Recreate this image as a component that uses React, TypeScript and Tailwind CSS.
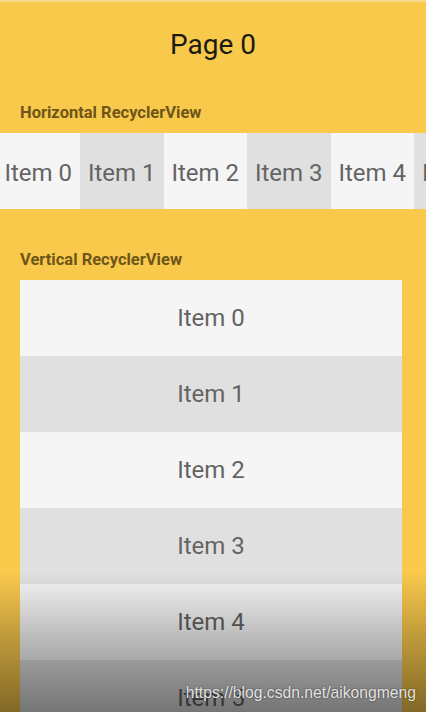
const H_ITEMS = [0, 1, 2, 3, 4, 5];
const V_ITEMS = [0, 1, 2, 3, 4, 5];

export default function App() {
  return (
    <div
      className="relative h-[712px] w-[426px] overflow-hidden bg-[#f9c94c]"
      style={{ fontFamily: "Roboto, 'Noto Sans', sans-serif" }}
    >
      <div className="h-[2px] bg-[#f5d98a]" />

      {/* Title */}
      <div className="flex h-[85px] items-center justify-center">
        <h1 className="text-[28px] leading-none text-[#1c1a14]">Page 0</h1>
      </div>

      {/* Horizontal list */}
      <p className="px-5 pb-[10px] pt-[16px] text-[16.5px] font-bold leading-[20px] text-[#6e5618]">Horizontal RecyclerView</p>
      <div className="flex h-[76px] overflow-hidden">
        <div className="ml-[-3.5px] flex shrink-0">
          {H_ITEMS.map((i) => (
            <div
              key={i}
              className={`flex w-[83.5px] shrink-0 items-center justify-center whitespace-nowrap pt-[3px] text-[24px] text-[#646464] ${
                i % 2 === 0 ? "bg-[#f5f5f5]" : "bg-[#e0e0e0]"
              }`}
            >
              Item {i}
            </div>
          ))}
        </div>
      </div>

      {/* Vertical list */}
      <p className="px-5 pb-[10px] pt-[41px] text-[16.5px] font-bold leading-[20px] text-[#6e5618]">Vertical RecyclerView</p>
      <div className="ml-5 mr-6 flex flex-col">
        {V_ITEMS.map((i) => (
          <div
            key={i}
            className={`flex h-[76px] shrink-0 items-center justify-center text-[24px] text-[#646464] ${
              i % 2 === 0 ? "bg-[#f5f5f5]" : "bg-[#e0e0e0]"
            }`}
          >
            Item {i}
          </div>
        ))}
      </div>

      {/* video shade at the bottom */}
      <div className="pointer-events-none absolute inset-x-0 bottom-0 h-[140px] bg-gradient-to-b from-transparent via-[rgba(0,0,0,0.25)] to-[rgba(0,0,0,0.48)]" />

      <div
        className="absolute bottom-[11px] right-[10px] text-[15.7px] leading-none text-[rgba(255,255,255,0.85)]"
        style={{ fontFamily: "'Liberation Sans', Arial, sans-serif", textShadow: "0 0 2px rgba(0,0,0,0.6)" }}
      >
        https://blog.csdn.net/aikongmeng
      </div>
    </div>
  );
}
